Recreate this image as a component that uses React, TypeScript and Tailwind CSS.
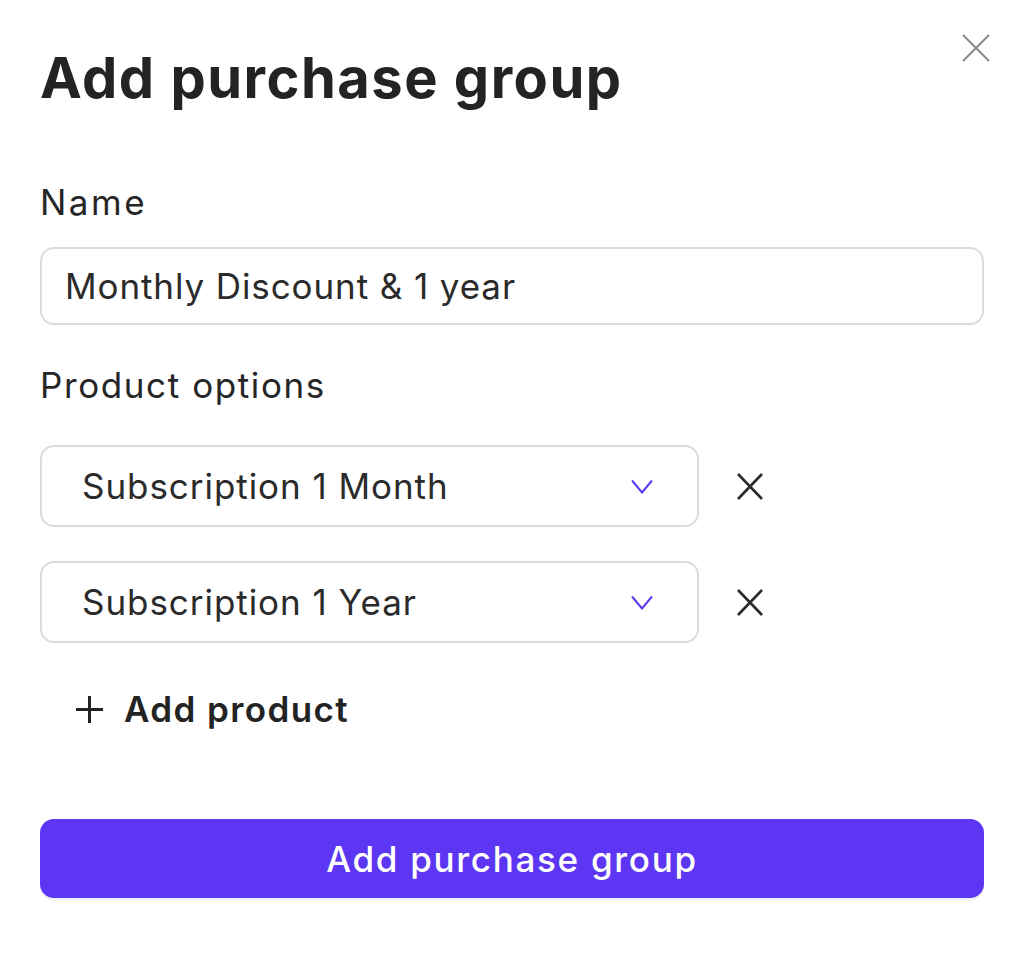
const font = { fontFamily: "Inter, 'Noto Sans', sans-serif" };

interface SelectRowProps {
  label: string;
}

const SelectRow = ({ label }: SelectRowProps) => {
  return (
    <div className="flex items-center">
      <div className="flex h-[82px] w-[659px] items-center justify-between rounded-[14px] border-2 border-[#dcdcdc] pl-[40px] pr-[44px]">
        <span className="text-[35px] leading-[40px] tracking-[0.95px] text-[#2b2b2b]">{label}</span>
        {/* chevron */}
        <svg viewBox="0 0 22 15" className="h-[15px] w-[22px]">
          <path d="M1 1.5 L11 13.5 L21 1.5" stroke="#5d36f4" strokeWidth="2" fill="none" />
        </svg>
      </div>
      {/* remove option */}
      <button className="ml-[37px] flex h-[28px] w-[28px] items-center justify-center">
        <svg viewBox="0 0 26 27" className="h-[27px] w-[26px]">
          <path d="M1 1 L25 26 M25 1 L1 26" stroke="#2b2b2b" strokeWidth="2.6" fill="none" />
        </svg>
      </button>
    </div>
  );
};

export default function App() {
  return (
    <div className="min-h-[956px] w-[1020px] bg-white pl-[40px] pr-[36px]" style={font}>
      {/* Header */}
      <div className="flex items-start justify-between pt-[34px]">
        <h1 className="mt-[12px] text-[56px] font-bold leading-[64px] tracking-[1.5px] text-[#232323]">
          Add purchase group
        </h1>
        <button className="mr-[-6px] flex h-[28px] w-[28px] items-center justify-center">
          <svg viewBox="0 0 28 28" className="h-[28px] w-[28px]">
            <path d="M1 1 L27 27 M27 1 L1 27" stroke="#8a8a8a" strokeWidth="2" fill="none" />
          </svg>
        </button>
      </div>

      {/* Name */}
      <label className="mt-[72px] block text-[35px] leading-[40px] tracking-[2.5px] text-[#262626]">Name</label>
      <div className="mt-[25px] flex h-[78px] items-center rounded-[14px] border-2 border-[#dcdcdc] px-[23px]">
        <span className="text-[35px] leading-[40px] tracking-[0.9px] text-[#2b2b2b]">Monthly Discount &amp; 1 year</span>
      </div>

      {/* Product options */}
      <label className="mt-[40px] block text-[35px] leading-[40px] tracking-[1.6px] text-[#262626]">
        Product options
      </label>
      <div className="mt-[40px] flex flex-col gap-[34px]">
        <SelectRow label="Subscription 1 Month" />
        <SelectRow label="Subscription 1 Year" />
      </div>

      <button className="mt-[46px] ml-[35px] flex items-center gap-[20px]">
        <svg viewBox="0 0 29 29" className="h-[29px] w-[29px]">
          <path d="M14.5 1 V28 M1 14.5 H28" stroke="#222" strokeWidth="3" fill="none" />
        </svg>
        <span className="text-[35px] font-semibold leading-[40px] tracking-[1.4px] text-[#232323]">Add product</span>
      </button>

      <button className="mt-[90px] flex h-[79px] w-full items-center justify-center rounded-[14px] bg-[#5d36f4] shadow-[0_3px_2px_rgba(0,0,0,0.06)]">
        <span className="text-[35px] font-medium leading-[40px] tracking-[1.7px] text-white">Add purchase group</span>
      </button>
    </div>
  );
}
